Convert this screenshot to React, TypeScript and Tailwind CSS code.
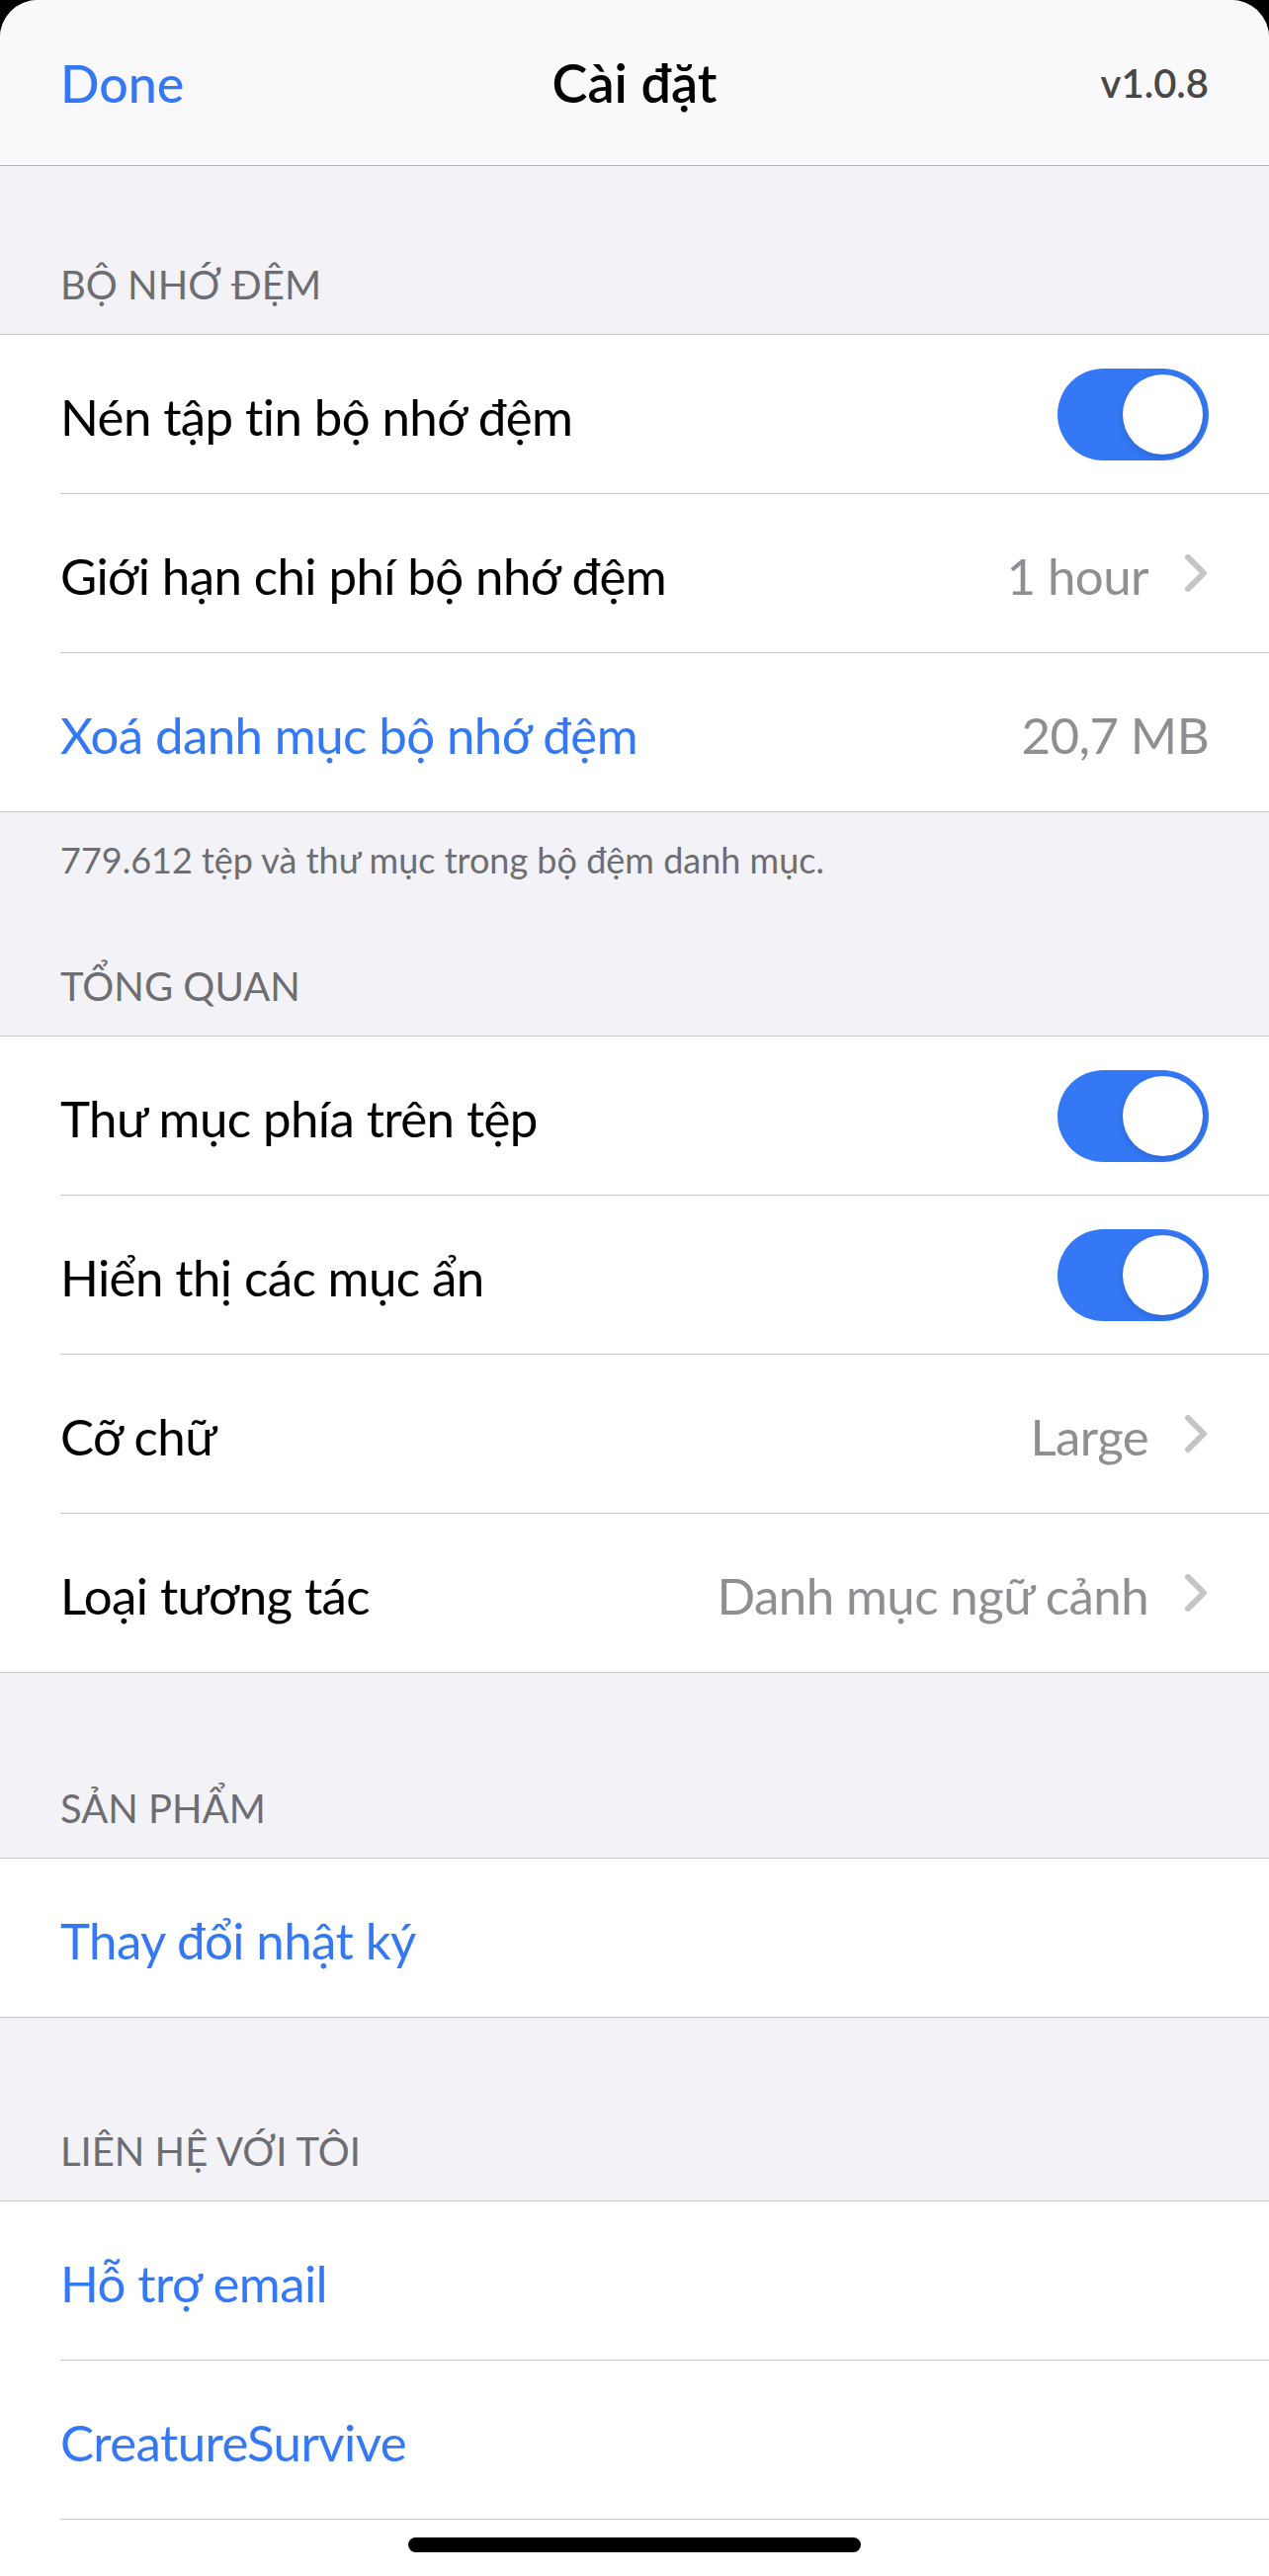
import React from 'react';

type Row = {
  label: string;
  link?: boolean;
  toggle?: boolean;
  value?: string;
  chevron?: boolean;
};

const font = "font-[Lato,'Noto_Sans',sans-serif]";

function Toggle() {
  return (
    <div className="w-[153px] h-[93px] rounded-full bg-[#3478f6] flex items-center justify-end px-[6px] shrink-0">
      <div className="w-[81px] h-[81px] rounded-full bg-white shadow-[0_3px_8px_rgba(0,0,0,0.15)]" />
    </div>
  );
}

function Chevron() {
  return (
    <svg width="26" height="40" viewBox="0 0 26 40" className="ml-[35px] shrink-0">
      <polyline points="5,4 21,20 5,36" fill="none" stroke="#c4c4c7" strokeWidth="6" strokeLinecap="round" strokeLinejoin="round" />
    </svg>
  );
}

function Group({ rows }: { rows: Row[] }) {
  return (
    <div className="bg-white border-y border-[#c6c6c8]">
      {rows.map((row, i) => (
        <div key={i} className="pl-[61px]">
          <div
            className={
              'flex items-center justify-between pr-[61px] ' +
              (i < rows.length - 1 ? 'h-[161px] border-b border-[#c6c6c8]' : 'h-[160px]')
            }
          >
            <span
              className={
                'text-[51px] tracking-[-0.6px] leading-none translate-y-[2px] ' +
                (row.link ? 'text-[#3478f6]' : 'text-black')
              }
            >
              {row.label}
            </span>
            {row.toggle && <Toggle />}
            {(row.value || row.chevron) && (
              <div className="flex items-center">
                {row.value && (
                  <span className="text-[51px] tracking-[-0.6px] leading-none translate-y-[2px] text-[#8e8e93]">
                    {row.value}
                  </span>
                )}
                {row.chevron && <Chevron />}
              </div>
            )}
          </div>
        </div>
      ))}
    </div>
  );
}

function SectionTitle({ title, top }: { title: string; top: string }) {
  return (
    <div className={top + ' pb-[26px] px-[61px] text-[40px] leading-[48px] text-[#6d6d72] uppercase'}>{title}</div>
  );
}

export default function App() {
  return (
    <div className={'min-h-screen bg-black ' + font}>
      <div className="relative h-[2607px] overflow-hidden rounded-t-[38px] bg-[#f2f2f7]">
        {/* Nav bar */}
        <header className="h-[168px] bg-[#f9f9fb] border-b border-[#b3b3b7] grid grid-cols-[1fr_auto_1fr] items-center px-[61px]">
          <span className="text-[52px] font-medium text-[#3478f6] leading-none">Done</span>
          <span className="text-[54px] font-semibold text-black leading-none">Cài đặt</span>
          <span className="text-[40px] font-semibold text-[#48484a] leading-none justify-self-end">v1.0.8</span>
        </header>

        <SectionTitle title="Bộ nhớ đệm" top="pt-[96px]" />
        <Group
          rows={[
            { label: 'Nén tập tin bộ nhớ đệm', toggle: true },
            { label: 'Giới hạn chi phí bộ nhớ đệm', value: '1 hour', chevron: true },
            { label: 'Xoá danh mục bộ nhớ đệm', link: true, value: '20,7 MB' },
          ]}
        />
        <div className="pt-[26px] px-[61px] text-[36px] leading-[44px] text-[#6d6d72]">
          779.612 tệp và thư mục trong bộ đệm danh mục.
        </div>

        <SectionTitle title="Tổng quan" top="pt-[82px]" />
        <Group
          rows={[
            { label: 'Thư mục phía trên tệp', toggle: true },
            { label: 'Hiển thị các mục ẩn', toggle: true },
            { label: 'Cỡ chữ', value: 'Large', chevron: true },
            { label: 'Loại tương tác', value: 'Danh mục ngữ cảnh', chevron: true },
          ]}
        />

        <SectionTitle title="Sản phẩm" top="pt-[113px]" />
        <Group rows={[{ label: 'Thay đổi nhật ký', link: true }]} />

        <SectionTitle title="Liên hệ với tôi" top="pt-[111px]" />
        <Group
          rows={[
            { label: 'Hỗ trợ email', link: true },
            { label: 'CreatureSurvive', link: true },
            { label: '', link: true },
          ]}
        />

        {/* Home indicator */}
        <div className="absolute bottom-[24px] left-1/2 -translate-x-1/2 w-[458px] h-[15px] rounded-full bg-black" />
      </div>
    </div>
  );
}
